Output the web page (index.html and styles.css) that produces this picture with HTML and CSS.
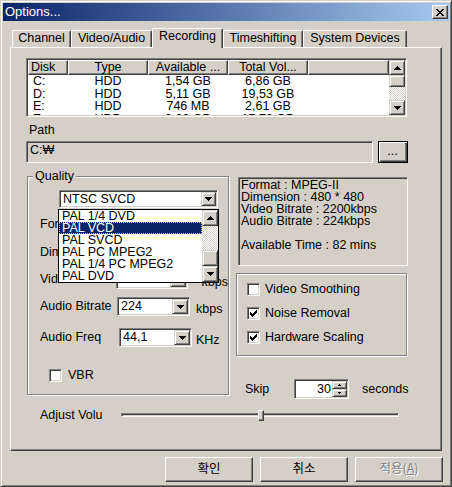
FILE: index.html
```html
<!DOCTYPE html>
<html>
<head>
<meta charset="utf-8">
<title>Options</title>
<link rel="stylesheet" href="styles.css">
</head>
<body>
<div class="window">
  <div class="titlebar">
    <span class="title">Options...</span>
    <div class="close">
      <svg width="8" height="7" viewBox="0 0 8 7" shape-rendering="crispEdges"><path d="M0 0h2v1h1v1h2V1h1V0h2v1H7v1H6v1H5v1h1v1h1v1h1v1H6V6H5V5H3v1H2v1H0V6h1V5h1V4h1V3H2V2H1V1H0z"/></svg>
    </div>
  </div>

  <div class="tabs">
    <div class="tab w-channel">Channel</div>
    <div class="tab w-va">Video/Audio</div>
    <div class="tab w-rec active">Recording</div>
    <div class="tab w-time">Timeshifting</div>
    <div class="tab w-sys">System Devices</div>
  </div>

  <div class="panel">
    <div class="listview sunken">
      <div class="lv-main">
        <div class="lv-header">
          <div class="hcell c1 left">Disk</div>
          <div class="hcell c2">Type</div>
          <div class="hcell c3">Available ...</div>
          <div class="hcell c4">Total Vol...</div>
          <div class="hcell c5"></div>
        </div>
        <div class="lv-row"><span class="c1 left cell">C:</span><span class="c2 cell">HDD</span><span class="c3 cell">1,54 GB</span><span class="c4 cell">6,86 GB</span></div>
        <div class="lv-row"><span class="c1 left cell">D:</span><span class="c2 cell">HDD</span><span class="c3 cell">5,11 GB</span><span class="c4 cell">19,53 GB</span></div>
        <div class="lv-row"><span class="c1 left cell">E:</span><span class="c2 cell">HDD</span><span class="c3 cell">746 MB</span><span class="c4 cell">2,61 GB</span></div>
        <div class="lv-row"><span class="c1 left cell">F:</span><span class="c2 cell">HDD</span><span class="c3 cell">9,03 GB</span><span class="c4 cell">17,73 GB</span></div>
      </div>
      <div class="vscroll">
        <div class="sb-btn h15"><svg width="7" height="4" viewBox="0 0 7 4" shape-rendering="crispEdges"><path d="M3 0h1v1h1v1h1v1h1v1H0V3h1V2h1V1h1z"/></svg></div>
        <div class="sb-thumb h12"></div>
        <div class="sb-track h13"></div>
        <div class="sb-btn h15"><svg width="7" height="4" viewBox="0 0 7 4" shape-rendering="crispEdges"><path d="M0 0h7v1H6v1H5v1H4v1H3V3H2V2H1V1H0z"/></svg></div>
      </div>
    </div>

    <div class="path-label">Path</div>
    <div class="path-row">
      <div class="pathbox sunken">C:₩</div>
      <div class="browse">...</div>
    </div>

    <div class="main-row">
      <fieldset class="quality">
        <legend>Quality</legend>
        <div class="combo preset sunken">
          <span class="combo-text">NTSC SVCD</span>
          <span class="combo-btn"><svg width="7" height="4" viewBox="0 0 7 4" shape-rendering="crispEdges"><path d="M0 0h7v1H6v1H5v1H4v1H3V3H2V2H1V1H0z"/></svg></span>
          <div class="droplist">
            <div class="drop-items">
              <div class="drop-item first">PAL 1/4 DVD</div>
              <div class="drop-item selected">PAL VCD</div>
              <div class="drop-item">PAL SVCD</div>
              <div class="drop-item">PAL PC MPEG2</div>
              <div class="drop-item">PAL 1/4 PC MPEG2</div>
              <div class="drop-item">PAL DVD</div>
            </div>
            <div class="vscroll">
              <div class="sb-btn h16"><svg width="7" height="4" viewBox="0 0 7 4" shape-rendering="crispEdges"><path d="M3 0h1v1h1v1h1v1h1v1H0V3h1V2h1V1h1z"/></svg></div>
              <div class="sb-track h24"></div>
              <div class="sb-thumb h16"></div>
              <div class="sb-btn h16"><svg width="7" height="4" viewBox="0 0 7 4" shape-rendering="crispEdges"><path d="M0 0h7v1H6v1H5v1H4v1H3V3H2V2H1V1H0z"/></svg></div>
            </div>
          </div>
        </div>

        <div class="field-row r-format">
          <span class="flabel lw77">Format</span>
          <div class="combo sunken cw73"><span class="combo-text">MPEG-II</span><span class="combo-btn"></span></div>
        </div>
        <div class="field-row r-dim">
          <span class="flabel lw77">Dimension</span>
          <div class="combo sunken cw73"><span class="combo-text">480 * 480</span><span class="combo-btn"></span></div>
        </div>
        <div class="field-row r-vid">
          <span class="flabel lw77">Video Bitrate</span>
          <div class="combo sunken cw73"><span class="combo-text">2200</span><span class="combo-btn"></span></div>
          <span class="unit u-vid">kbps</span>
        </div>
        <div class="field-row r-ab">
          <span class="flabel lw77">Audio Bitrate</span>
          <div class="combo sunken cw73"><span class="combo-text">224</span><span class="combo-btn"><svg width="7" height="4" viewBox="0 0 7 4" shape-rendering="crispEdges"><path d="M0 0h7v1H6v1H5v1H4v1H3V3H2V2H1V1H0z"/></svg></span></div>
          <span class="unit u-ab">kbps</span>
        </div>
        <div class="field-row r-af">
          <span class="flabel lw79">Audio Freq</span>
          <div class="combo sunken cw73"><span class="combo-text">44,1</span><span class="combo-btn"><svg width="7" height="4" viewBox="0 0 7 4" shape-rendering="crispEdges"><path d="M0 0h7v1H6v1H5v1H4v1H3V3H2V2H1V1H0z"/></svg></span></div>
          <span class="unit u-af">KHz</span>
        </div>
        <div class="vbr-row">
          <span class="cb sunken"></span>
          <span>VBR</span>
        </div>
      </fieldset>

      <div class="right-col">
        <div class="info sunken">
          <div class="iline">Format : MPEG-II</div>
          <div class="iline">Dimension : 480 * 480</div>
          <div class="iline">Video Bitrate : 2200kbps</div>
          <div class="iline">Audio Bitrate : 224kbps</div>
          <div class="iline blank"></div>
          <div class="iline">Available Time : 82 mins</div>
        </div>
        <div class="checks">
          <div class="check-row"><span class="cb sunken"></span><span>Video Smoothing</span></div>
          <div class="check-row"><span class="cb sunken"><svg width="9" height="9" viewBox="0 0 9 9" shape-rendering="crispEdges"><path d="M1 3h1v1h1v1h1V4h1V3h1V2h1V1h1v3H7v1H6v1H5v1H4v1H3V7H2V6H1z"/></svg></span><span>Noise Removal</span></div>
          <div class="check-row"><span class="cb sunken"><svg width="9" height="9" viewBox="0 0 9 9" shape-rendering="crispEdges"><path d="M1 3h1v1h1v1h1V4h1V3h1V2h1V1h1v3H7v1H6v1H5v1H4v1H3V7H2V6H1z"/></svg></span><span>Hardware Scaling</span></div>
        </div>
        <div class="skip-row">
          <span class="skip-label">Skip</span>
          <div class="spin sunken">
            <span class="spin-val">30</span>
            <div class="spin-btns">
              <div class="spin-b"><svg width="3" height="2" viewBox="0 0 3 2" shape-rendering="crispEdges"><path d="M1 0h1v1h1v1H0V1h1z"/></svg></div>
              <div class="spin-b"><svg width="3" height="2" viewBox="0 0 3 2" shape-rendering="crispEdges"><path d="M0 0h3v1H2v1H1V1H0z"/></svg></div>
            </div>
          </div>
          <span class="seconds">seconds</span>
        </div>
      </div>
    </div>

    <div class="volume-row">
      <span class="vol-label">Adjust Volu</span>
      <div class="track"><div class="thumb"></div></div>
    </div>
  </div>

  <div class="buttons">
    <div class="btn">확인</div>
    <div class="btn">취소</div>
    <div class="btn disabled">적용(<u>A</u>)</div>
  </div>
</div>
</body>
</html>
```

FILE: styles.css
```css
* { box-sizing: border-box; }
html, body { margin: 0; padding: 0; }
body {
  background: #d4d0c8;
  font-family: "Liberation Sans", "Noto Sans CJK KR", sans-serif;
  font-size: 12.5px;
  color: #000;
  width: 452px;
  height: 487px;
  overflow: hidden;
}
svg { display: block; fill: #000; }

.sunken {
  border: 1px solid;
  border-color: #808080 #fff #fff #808080;
  box-shadow: inset 1px 1px #404040, inset -1px -1px #d4d0c8;
  padding: 1px;
}

.window {
  width: 452px;
  height: 487px;
  border: 1px solid;
  border-color: #d4d0c8 #404040 #404040 #d4d0c8;
  box-shadow: inset 1px 1px #fff, inset -1px -1px #808080;
  padding: 2px;
  display: flex;
  flex-direction: column;
}

.titlebar {
  height: 18px;
  flex: none;
  background: linear-gradient(to right, #0a246a, #a6caf0);
  display: flex;
  align-items: flex-start;
  justify-content: space-between;
}
.title {
  color: #fff;
  font-size: 13px;
  line-height: 18px;
  padding-left: 2px;
}
.close {
  width: 16px;
  height: 14px;
  margin: 2px 1px 0 0;
  background: #d4d0c8;
  border: 1px solid;
  border-color: #fff #404040 #404040 #fff;
  box-shadow: inset -1px -1px #808080;
  display: flex;
  align-items: center;
  justify-content: center;
  padding-right: 1px;
}

/* tabs */
.tabs {
  display: flex;
  align-items: flex-end;
  height: 19px;
  flex: none;
  margin: 7px 0 0 9px;
}
.tab {
  height: 17px;
  background: #d4d0c8;
  border-top: 1px solid #fff;
  border-left: 1px solid #fff;
  border-right: 1px solid #404040;
  box-shadow: inset -1px 0 #808080;
  border-radius: 2px 2px 0 0;
  text-align: center;
  line-height: 13px;
  padding-top: 1px;
  white-space: nowrap;
}
.tab.active {
  height: 20px;
  margin-bottom: -1px;
  position: relative;
  z-index: 1;
}
.w-channel { width: 59px; }
.w-va { width: 81px; }
.w-rec { width: 71px; }
.w-time { width: 80px; }
.w-sys { width: 104px; }

/* panel */
.panel {
  width: 432px;
  height: 404px;
  flex: none;
  margin-left: 7px;
  border: 1px solid;
  border-color: #fff #404040 #404040 #fff;
  box-shadow: inset -1px -1px #808080;
  padding: 10px 0 0 15px;
  display: flex;
  flex-direction: column;
  align-items: flex-start;
}

/* list view */
.listview {
  width: 381px;
  height: 59px;
  background: #fff;
  display: flex;
  overflow: hidden;
}
.lv-main { flex: 1; overflow: hidden; }
.lv-header { display: flex; height: 15px; }
.hcell {
  height: 15px;
  background: #d4d0c8;
  border: 1px solid;
  border-color: #fff #404040 #404040 #fff;
  box-shadow: inset -1px -1px #808080;
  line-height: 12px;
  text-align: center;
  white-space: nowrap;
  overflow: hidden;
}
.hcell.left { text-align: left; padding-left: 2px; }
.c1 { width: 40px; }
.c2 { width: 80px; }
.c3 { width: 80px; }
.c4 { width: 80px; }
.c5 { width: 81px; }
.lv-row { display: flex; height: 12.5px; line-height: 12.5px; }
.cell { text-align: center; white-space: nowrap; }
.cell.left { text-align: left; padding-left: 5px; }

.vscroll {
  width: 16px;
  flex: none;
  display: flex;
  flex-direction: column;
}
.sb-btn, .sb-thumb {
  background: #d4d0c8;
  border: 1px solid;
  border-color: #d4d0c8 #404040 #404040 #d4d0c8;
  box-shadow: inset 1px 1px #fff, inset -1px -1px #808080;
  display: flex;
  align-items: center;
  justify-content: center;
}
.sb-track {
  background: repeating-conic-gradient(#fff 0 25%, #d4d0c8 0 50%) 0 0 / 2px 2px;
}
.h12 { height: 12px; }
.h13 { height: 13px; }
.h15 { height: 15px; }
.h16 { height: 16px; }
.h24 { height: 24px; }

/* path */
.path-label {
  margin: 7px 0 0 3px;
  line-height: 13px;
}
.path-row {
  display: flex;
  gap: 5px;
  margin-top: 4px;
}
.pathbox {
  width: 347px;
  height: 22px;
  background: #d4d0c8;
  line-height: 13px;
  padding: 2px 2px 0 3px;
}
.browse {
  width: 30px;
  height: 22px;
  border: 1px solid #000;
  box-shadow: inset 1px 1px #fff, inset -1px -1px #404040, inset -2px -2px #808080;
  text-align: center;
  line-height: 18px;
  padding-right: 1px;
}

/* main area */
.main-row {
  display: flex;
  align-items: flex-start;
  margin-top: 7px;
  height: 229px;
}
.quality {
  width: 202px;
  height: 225px;
  margin: 0 0 0 1px;
  padding: 0;
  min-width: 0;
  border: 1px solid #808080;
  box-shadow: inset 1px 1px #fff, 1px 1px #fff;
}
.quality legend {
  margin-left: 5px;
  padding: 0 2px;
  line-height: 12px;
  background: #d4d0c8;
}

.combo {
  display: flex;
  background: #fff;
  height: 19px;
}
.combo-text {
  flex: 1;
  padding-left: 2px;
  line-height: 15px;
  white-space: nowrap;
  overflow: hidden;
}
.combo-btn {
  width: 16px;
  flex: none;
  background: #d4d0c8;
  border: 1px solid;
  border-color: #d4d0c8 #404040 #404040 #d4d0c8;
  box-shadow: inset 1px 1px #fff, inset -1px -1px #808080;
  display: flex;
  align-items: center;
  justify-content: center;
}
.preset {
  width: 159px;
  height: 18px;
  margin: 8px 0 0 31px;
  position: relative;
}
.preset .combo-text { line-height: 14px; }
.preset .combo-btn { width: 15px; }

.droplist {
  position: absolute;
  left: -2px;
  top: 18px;
  width: 161px;
  height: 74px;
  border: 1px solid #000;
  background: #fff;
  display: flex;
  z-index: 5;
}
.drop-items { width: 143px; overflow: hidden; }
.drop-item {
  height: 12px;
  line-height: 12px;
  padding-left: 3px;
  white-space: nowrap;
}
.drop-item.selected {
  background: #0a246a;
  color: #fff;
  outline: 1px dotted #e8c878;
  outline-offset: -1px;
}

.field-row {
  display: flex;
  align-items: center;
  height: 19px;
  padding-left: 12px;
}
.r-format { margin-top: 7px; }
.r-dim { margin-top: 9px; }
.r-vid { margin-top: 8px; }
.r-ab { margin-top: 8px; }
.r-af { margin-top: 12px; }
.flabel { line-height: 13px; white-space: nowrap; }
.lw77 { width: 77px; }
.lw79 { width: 79px; }
.cw73 { width: 73px; }
.unit {
  align-self: flex-end;
  line-height: 13px;
}
.u-vid { margin-left: 14px; }
.u-ab { margin-left: 6px; }
.u-af { margin-left: 4px; }

.vbr-row {
  display: flex;
  align-items: center;
  gap: 6px;
  height: 13px;
  margin: 22px 0 0 21px;
  line-height: 13px;
}

.cb {
  width: 13px;
  height: 13px;
  flex: none;
  background: #fff;
}

/* right column */
.right-col {
  width: 172px;
  margin-left: 7px;
  display: flex;
  flex-direction: column;
  align-items: flex-start;
}
.info {
  width: 170px;
  height: 89px;
  margin: 7px 0 0 2px;
  background: #d4d0c8;
  padding: 1px 0 0 2px;
}
.iline { line-height: 12px; height: 12px; white-space: nowrap; }
.checks {
  width: 171px;
  height: 83px;
  margin-top: 7px;
  border: 1px solid #808080;
  box-shadow: inset 1px 1px #fff, 1px 1px #fff;
  padding: 9px 0 0 10px;
  display: flex;
  flex-direction: column;
  gap: 11px;
}
.check-row {
  display: flex;
  align-items: center;
  gap: 5px;
  height: 13px;
  line-height: 13px;
  white-space: nowrap;
}
.skip-row {
  display: flex;
  align-items: center;
  height: 20px;
  margin-top: 23px;
  line-height: 13px;
}
.skip-label { width: 49px; margin-left: 9px; }
.spin {
  width: 55px;
  height: 20px;
  background: #fff;
  display: flex;
}
.spin-val {
  flex: 1;
  text-align: right;
  padding-right: 1px;
  line-height: 16px;
}
.spin-btns {
  width: 15px;
  display: flex;
  flex-direction: column;
}
.spin-b {
  height: 8px;
  background: #d4d0c8;
  border: 1px solid;
  border-color: #d4d0c8 #404040 #404040 #d4d0c8;
  box-shadow: inset 1px 1px #fff, inset -1px -1px #808080;
  display: flex;
  align-items: center;
  justify-content: center;
}
.seconds { margin-left: 13px; }

/* volume */
.volume-row {
  display: flex;
  align-items: center;
  height: 12px;
  margin: 10px 0 0 14px;
}
.vol-label { width: 81px; line-height: 12px; white-space: nowrap; }
.track {
  width: 278px;
  height: 4px;
  position: relative;
  border: 1px solid;
  border-color: #808080 #fff #fff #808080;
  box-shadow: inset 1px 1px #404040;
}
.thumb {
  position: absolute;
  left: 136px;
  top: -4px;
  width: 6px;
  height: 11px;
  background: #d4d0c8;
  border: 1px solid;
  border-color: #fff #404040 #404040 #fff;
  box-shadow: inset -1px -1px #808080;
}

/* buttons */
.buttons {
  display: flex;
  justify-content: flex-end;
  gap: 7px;
  margin-top: 6px;
  padding-right: 6px;
}
.btn {
  width: 88px;
  height: 25px;
  border: 1px solid;
  border-color: #fff #404040 #404040 #fff;
  box-shadow: inset -1px -1px #808080;
  display: flex;
  align-items: center;
  justify-content: center;
  font-family: "Noto Sans CJK KR", "Liberation Sans", sans-serif;
  font-size: 12.5px;
  line-height: 14px;
  padding-bottom: 3px;
}
.btn.disabled {
  color: #808080;
  text-shadow: 1px 1px #fff;
}
```
